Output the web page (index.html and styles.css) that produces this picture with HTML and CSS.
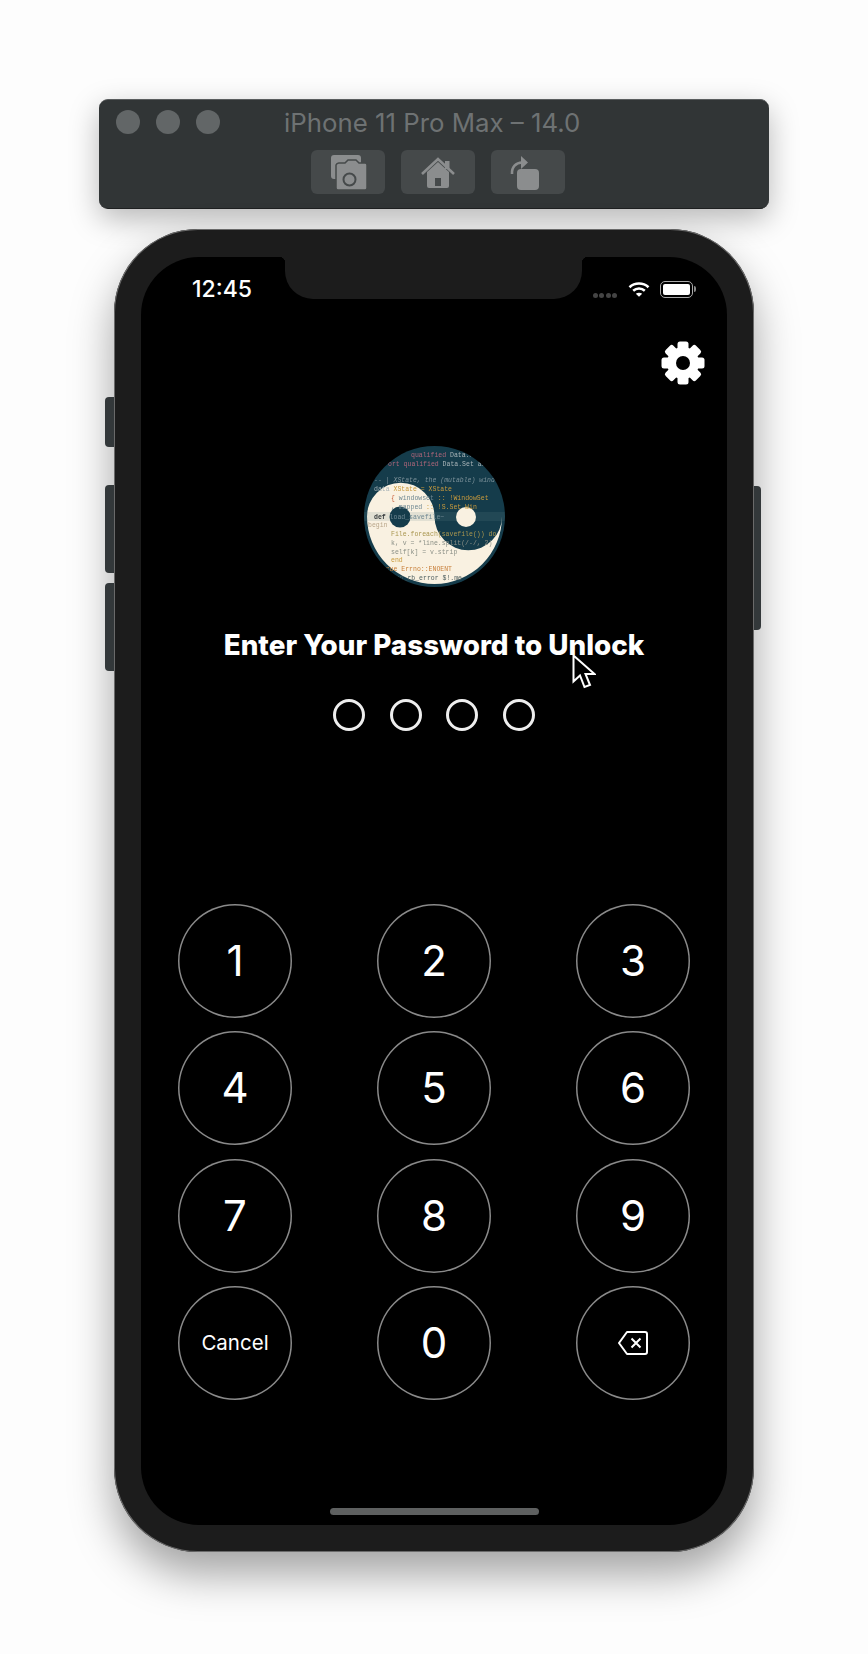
FILE: index.html
```html
<!DOCTYPE html>
<html lang="en">
<head>
    <meta charset="UTF-8">
    <title>iPhone 11 Pro Max – 14.0</title>
    <link rel="stylesheet" href="styles.css">
</head>
<body>
    <!-- simulator window bar -->
    <header class="sim-bar">
        <div class="sim-title-row">
            <div class="lights"><span></span><span></span><span></span></div>
            <div class="sim-title">iPhone 11 Pro Max – 14.0</div>
        </div>
        <div class="sim-tools">
            <div class="sim-tool">
                <svg viewBox="0 0 74 44" width="74" height="44">
                    <rect x="20" y="5" width="30" height="24" rx="3" fill="#8b8d8e"/>
                    <path d="M28 13h6l3-3h8l3 3h6a2 2 0 0 1 2 2v23a2 2 0 0 1-2 2H27a2 2 0 0 1-2-2V15a3 3 0 0 1 3-2z" fill="#8b8d8e" stroke="#45494a" stroke-width="1.5"/>
                    <circle cx="38.5" cy="29.5" r="6" fill="none" stroke="#45494a" stroke-width="2"/>
                </svg>
            </div>
            <div class="sim-tool">
                <svg viewBox="0 0 74 44" width="74" height="44">
                    <rect x="44" y="11" width="4.5" height="8" fill="#8b8d8e"/>
                    <path d="M26 22L37 12l11 10v14a2 2 0 0 1-2 2H28a2 2 0 0 1-2-2z" fill="#8b8d8e"/>
                    <path d="M21 24L37 9l16 15" fill="none" stroke="#8b8d8e" stroke-width="2.6"/>
                    <rect x="34" y="28" width="6" height="8" fill="#45494a"/>
                </svg>
            </div>
            <div class="sim-tool">
                <svg viewBox="0 0 74 44" width="74" height="44">
                    <rect x="26" y="19" width="22" height="21" rx="4" fill="#8b8d8e"/>
                    <path d="M21 24c-.5-7 4-11.500 10-11.500" fill="none" stroke="#8b8d8e" stroke-width="2.600"/>
                    <path d="M30 6l7 6.500-7 6.500z" fill="#8b8d8e"/>
                </svg>
            </div>
        </div>
    </header>

    <div class="phone">
        <span class="side-btn side-mute"></span>
        <span class="side-btn side-up"></span>
        <span class="side-btn side-down"></span>
        <span class="side-btn side-power"></span>

        <main class="screen">
            <div class="notch"></div>

            <div class="status">
                <span class="time">12:45</span>
                <div class="status-right">
                    <div class="signal"><i></i><i></i><i></i><i></i></div>
                    <svg class="wifi" viewBox="0 0 22 16" width="22" height="16">
                        <path d="M1.500 6.200C6.800 1.300 15.200 1.300 20.500 6.200" fill="none" stroke="#fff" stroke-width="2.600"/>
                        <path d="M5.200 9.700C8.500 6.800 13.500 6.800 16.800 9.700" fill="none" stroke="#fff" stroke-width="2.600"/>
                        <path d="M11 15.800L7.800 12.700C9.700 11.300 12.300 11.300 14.200 12.700z" fill="#fff"/>
                    </svg>
                    <div class="battery"><span></span></div>
                </div>
            </div>

            <div class="settings">
                <svg viewBox="0 0 44 44" width="44" height="44">
                    <circle cx="22" cy="22" r="16" fill="#fff"/>
                    <g fill="#fff">
                        <rect x="16.500" y="0.500" width="11" height="43" rx="2.500"/>
                        <rect x="16.500" y="0.500" width="11" height="43" rx="2.500" transform="rotate(45 22 22)"/>
                        <rect x="16.500" y="0.500" width="11" height="43" rx="2.500" transform="rotate(90 22 22)"/>
                        <rect x="16.500" y="0.500" width="11" height="43" rx="2.500" transform="rotate(135 22 22)"/>
                    </g>
                    <circle cx="22" cy="22" r="7" fill="#000"/>
                </svg>
            </div>

            <svg class="logo" viewBox="0 0 141 141" width="141" height="141">
                <defs>
                    <clipPath id="logoClip"><circle cx="70.500" cy="70.500" r="70.500"/></clipPath>
                </defs>
                <g clip-path="url(#logoClip)">
                    <rect width="141" height="141" fill="#153c4b"/>
                    <path d="M3 70.500A33.750 33.750 0 0 1 70.500 70.500A33.750 33.750 0 0 0 138 70.500A67.500 67.500 0 0 1 3 70.500Z" fill="#f9f1e1"/>
                    <rect x="0" y="66" width="141" height="9" fill="#6c8791" opacity="0.16"/>
                    <circle cx="36" cy="71" r="10.500" fill="#153c4b"/>
                    <circle cx="102" cy="71" r="10" fill="#f9f1e1"/>
                    <g class="code">
                        <text x="47" y="11" fill="#b0667a">qualified <tspan fill="#a9b4b8">Data.Map</tspan></text>
                        <text x="24" y="20" fill="#b0667a">ort qualified <tspan fill="#a9b4b8">Data.Set as</tspan></text>
                        <text x="10" y="36" fill="#7b9099" font-style="italic">-- | XState, the (mutable) wind</text>
                        <text x="10" y="45"><tspan fill="#a9b4b8">data </tspan><tspan fill="#c99a3c">XState = XState</tspan></text>
                        <text x="27" y="54"><tspan fill="#c9603c">{ </tspan><tspan fill="#6f8892">windowset</tspan><tspan fill="#c99a3c">    :: !WindowSet</tspan></text>
                        <text x="27" y="63"><tspan fill="#6f8892">, mapped   </tspan><tspan fill="#c99a3c">    :: !S.Set Win</tspan></text>
                        <text x="10" y="72.500"><tspan fill="#33383a" font-weight="bold">def </tspan><tspan fill="#6f8892">load_savefile~</tspan></text>
                        <text x="4" y="81" fill="#b9a68a">  begin</text>
                        <text x="27" y="90" fill="#a9964f">File.foreach(savefile()) do</text>
                        <text x="27" y="99" fill="#8a8f86">k, v = *line.split(/-/, 2)</text>
                        <text x="27" y="108" fill="#8a8f86">self[k] = v.strip</text>
                        <text x="27" y="116" fill="#c99a3c">end</text>
                        <text x="10" y="125" fill="#c9803c">rescue Errno::ENOENT</text>
                        <text x="20" y="134" fill="#4f5f60">setup_rb_error $!.me</text>
                    </g>
                </g>
            </svg>

            <h1 class="prompt">Enter Your Password to Unlock</h1>

            <div class="pins"><span></span><span></span><span></span><span></span></div>

            <div class="keypad">
                <button class="key">1</button>
                <button class="key">2</button>
                <button class="key">3</button>
                <button class="key">4</button>
                <button class="key">5</button>
                <button class="key">6</button>
                <button class="key">7</button>
                <button class="key">8</button>
                <button class="key">9</button>
                <button class="key key-text">Cancel</button>
                <button class="key">0</button>
                <button class="key">
                    <svg viewBox="0 0 30 24" width="30" height="24">
                        <path d="M9 1h18a2 2 0 0 1 2 2v18a2 2 0 0 1-2 2H9L1 12z" fill="none" stroke="#fff" stroke-width="2" stroke-linejoin="round"/>
                        <path d="M13.500 7.500l9 9M22.500 7.500l-9 9" fill="none" stroke="#fff" stroke-width="2"/>
                    </svg>
                </button>
            </div>

            <div class="home-bar"></div>

            <svg class="cursor" viewBox="0 0 24 38" width="24" height="38">
                <path d="M1.500 1.500V27.500L8 21.500L12.500 33L18 31L13.500 20H22.500z" fill="#000" stroke="#fff" stroke-width="2"/>
            </svg>
        </main>
    </div>
</body>
</html>
```

FILE: styles.css
```css
body {
    margin: 0;
    height: 1654px;
    padding-top: 99px;
    box-sizing: border-box;
    overflow: hidden;
    display: flex;
    flex-direction: column;
    align-items: center;
    background-color: #fdfdfd;
    font-family: Inter, "Liberation Sans", sans-serif;
}

/* window bar */
.sim-bar {
    width: 670px;
    height: 110px;
    box-sizing: border-box;
    border-top: 1px solid #5a5d5e;
    border-bottom: 1px solid #1e2021;
    border-radius: 9px;
    background-color: #313536;
    box-shadow: 0 10px 30px rgba(0, 0, 0, 0.28);
}
.sim-title-row {
    display: flex;
    align-items: center;
    height: 24px;
    margin-top: 10px;
    padding-left: 17px;
}
.lights {
    display: flex;
    gap: 16px;
}
.lights span {
    width: 24px;
    height: 24px;
    border-radius: 50%;
    background-color: #626667;
}
.sim-title {
    margin-left: 64px;
    font-size: 25.800px;
    color: #6e7273;
    white-space: nowrap;
}
.sim-tools {
    display: flex;
    justify-content: center;
    gap: 16px;
    margin-top: 16px;
    padding-left: 8px;
}
.sim-tool {
    width: 74px;
    height: 44px;
    border-radius: 6px;
    background-color: #45494a;
}
.sim-tool svg {
    display: block;
}

/* phone */
.phone {
    position: relative;
    width: 640px;
    height: 1323px;
    margin-top: 20px;
    padding: 28px 27px 0;
    box-sizing: border-box;
    border-radius: 84px;
    background-color: #1c1c1c;
    box-shadow: inset 0 0 0 1px #6a6a6a, 0 22px 44px rgba(0, 0, 0, 0.36);
}
.side-btn {
    position: absolute;
    width: 9px;
    border-radius: 4px 0 0 4px;
    background-color: #33383a;
    left: -9px;
}
.side-mute {
    top: 168px;
    height: 50px;
}
.side-up {
    top: 256px;
    height: 88px;
}
.side-down {
    top: 354px;
    height: 88px;
}
.side-power {
    left: auto;
    right: -7px;
    top: 257px;
    width: 7px;
    height: 144px;
    border-radius: 0 4px 4px 0;
}

.screen {
    position: relative;
    height: 1268px;
    display: flex;
    flex-direction: column;
    align-items: center;
    border-radius: 58px;
    background-color: #000;
    color: #fff;
}
.notch {
    position: absolute;
    top: 0;
    left: 144px;
    width: 297px;
    height: 42px;
    border-radius: 0 0 28px 28px;
    background-color: #1c1c1c;
}
.notch::before,
.notch::after {
    content: "";
    position: absolute;
    top: 0;
    width: 6px;
    height: 6px;
}
.notch::before {
    left: -6px;
    background: radial-gradient(circle at 0 100%, transparent 6px, #1c1c1c 6.5px);
}
.notch::after {
    right: -6px;
    background: radial-gradient(circle at 100% 100%, transparent 6px, #1c1c1c 6.5px);
}

.status {
    align-self: stretch;
    height: 64px;
    padding: 0 34px 0 51px;
    display: flex;
    align-items: center;
    justify-content: space-between;
}
.time {
    font-size: 23px;
    font-weight: 500;
}
.status-right {
    display: flex;
    align-items: center;
}
.signal {
    display: flex;
    gap: 1.500px;
    margin-top: 13px;
}
.signal i {
    width: 5px;
    height: 5px;
    border-radius: 50%;
    background-color: #444;
}
.wifi {
    margin-left: 11px;
}
.battery {
    position: relative;
    width: 33px;
    height: 17px;
    margin-left: 10px;
    padding: 2px;
    box-sizing: border-box;
    border: 1.500px solid #a9a9a9;
    border-radius: 5px;
}
.battery span {
    display: block;
    height: 100%;
    border-radius: 2px;
    background-color: #fff;
}
.battery::after {
    content: "";
    position: absolute;
    right: -4px;
    top: 4px;
    width: 2px;
    height: 6px;
    border-radius: 0 2px 2px 0;
    background-color: #8a8a8a;
}

.settings {
    align-self: stretch;
    height: 44px;
    margin-top: 20px;
    padding-right: 22px;
    display: flex;
    justify-content: flex-end;
}
.logo {
    display: block;
    margin-top: 61px;
    filter: blur(0.4px);
}
.code {
    font-family: "Liberation Mono", monospace;
    font-size: 6.500px;
}
.prompt {
    margin: 43px 0 0;
    font-size: 27.800px;
    line-height: 30px;
    font-weight: 800;
}
.pins {
    display: flex;
    gap: 24.500px;
    margin-top: 39px;
}
.pins span {
    width: 32px;
    height: 32px;
    box-sizing: border-box;
    border: 3px solid #eee;
    border-radius: 50%;
}

.keypad {
    display: grid;
    grid-template-columns: repeat(3, 114px);
    grid-auto-rows: 114px;
    column-gap: 85px;
    row-gap: 13.400px;
    margin-top: 173px;
}
.key {
    display: flex;
    align-items: center;
    justify-content: center;
    padding: 0 0 1px;
    border: none;
    border-radius: 50%;
    background: none;
    box-shadow: inset 0 0 0 1.500px #8a8a8a;
    color: #fff;
    font-family: inherit;
    font-size: 42px;
}
.key-text {
    font-size: 20.500px;
}

.home-bar {
    width: 209px;
    height: 7px;
    margin-top: auto;
    margin-bottom: 10px;
    border-radius: 4px;
    background-color: #5e6060;
}
.cursor {
    position: absolute;
    left: 431px;
    top: 397px;
}
```
